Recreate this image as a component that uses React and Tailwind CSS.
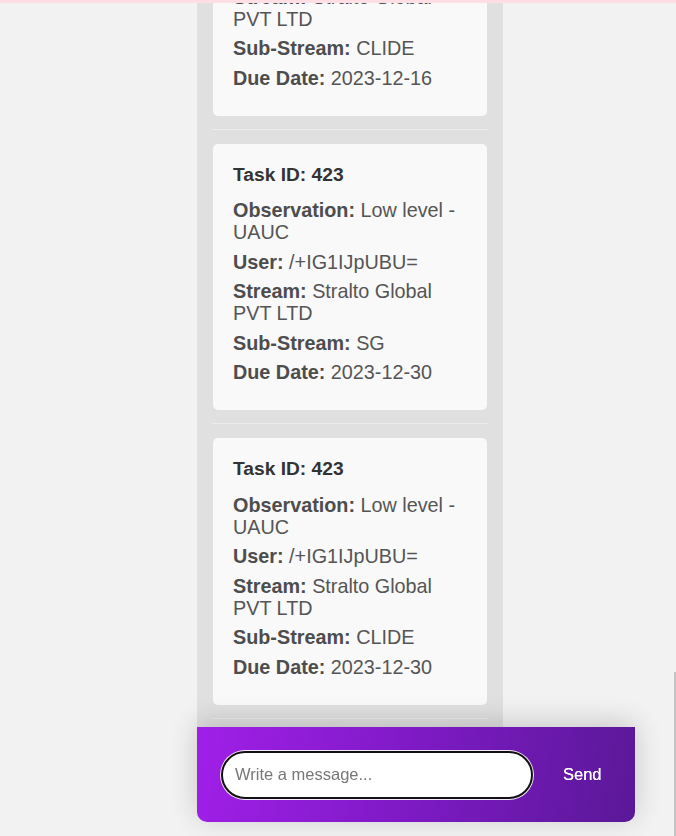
import React from 'react';

const tasks = [
  { id: 423, observation: 'Low level - UAUC', user: '/+IG1IJpUBU=', stream: 'Stralto Global PVT LTD', subStream: 'CLIDE', dueDate: '2023-12-16' },
  { id: 423, observation: 'Low level - UAUC', user: '/+IG1IJpUBU=', stream: 'Stralto Global PVT LTD', subStream: 'SG', dueDate: '2023-12-30' },
  { id: 423, observation: 'Low level - UAUC', user: '/+IG1IJpUBU=', stream: 'Stralto Global PVT LTD', subStream: 'CLIDE', dueDate: '2023-12-30' },
  { id: 424, observation: 'Low level - UAUC', user: '/+IG1IJpUBU=', stream: 'Stralto Global PVT LTD', subStream: 'SG', dueDate: '2024-01-05' },
];

function Field({ label, value }) {
  return (
    <p className="mt-[7.5px] text-[19.8px] leading-[22px] text-[#555]">
      <strong className="font-bold text-[#4d4d4d]">{label}:</strong> {value}
    </p>
  );
}

function TaskCard({ task }) {
  return (
    <div className="pb-[13px] mb-[14px] border-b border-[#ececec] -mx-px">
      <div className="mx-px bg-[#f9f9f9] rounded-[5px] px-5 pt-[20px] pb-[27px]">
        <h3 className="text-[19.2px] leading-[22px] font-bold text-[#333] mb-[13.5px]">Task ID: {task.id}</h3>
        <Field label="Observation" value={task.observation} />
        <Field label="User" value={task.user} />
        <Field label="Stream" value={task.stream} />
        <Field label="Sub-Stream" value={task.subStream} />
        <Field label="Due Date" value={task.dueDate} />
      </div>
    </div>
  );
}

export default function App() {
  return (
    <div className="h-[836px] overflow-hidden bg-[#f2f2f2] font-['Liberation_Sans',Arial,sans-serif]">
      {/* top strip */}
      <div className="fixed top-0 left-0 right-0 h-[3px] bg-[#ffdfe5] z-20"></div>

      {/* task list, scrolled */}
      <div className="ml-[197px] w-[306px] h-[810px] overflow-hidden bg-[#e0e0e0] px-4">
        <div className="-mt-[151px]">
          {tasks.map((task, index) => (
            <TaskCard key={index} task={task} />
          ))}
        </div>
      </div>

      {/* chat input bar */}
      <div className="fixed left-[197px] bottom-[14px] w-[438px] h-[95px] rounded-b-[10px] bg-[linear-gradient(100deg,#a11fe8_0%,#7d1ac4_50%,#5a1897_100%)] shadow-[0_-4px_28px_rgba(0,0,0,0.18)] flex items-center pl-6 pr-[13px] gap-[10px] z-10">
        <input
          type="text"
          placeholder="Write a message..."
          className="w-[312px] h-12 rounded-full bg-white border-2 border-[#111] ring-1 ring-white/90 px-3 text-[16.5px] text-[#333] placeholder:text-[#777] outline-none"
        />
        <button className="px-5 text-[16.5px] text-white [text-shadow:0_0_0.4px_#fff]">Send</button>
      </div>

      {/* scrollbar edge */}
      <div className="fixed right-0 bottom-0 w-[2px] h-[164px] bg-[#c4c4c4]"></div>
    </div>
  );
}
